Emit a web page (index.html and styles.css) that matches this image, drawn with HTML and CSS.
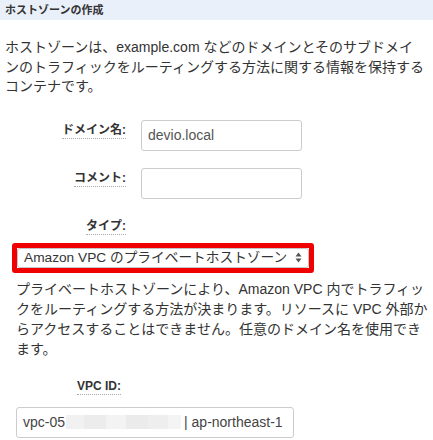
FILE: index.html
```html
<!DOCTYPE html>
<html lang="ja">
<head>
<meta charset="utf-8">
<link rel="stylesheet" href="styles.css">
</head>
<body>
<div class="header">ホストゾーンの作成</div>
<div class="content">
  <p class="desc">ホストゾーンは、example.com などのドメインとそのサブドメインのトラフィックをルーティングする方法に関する情報を保持するコンテナです。</p>
  <div class="form">
    <div class="row">
      <div class="label"><span>ドメイン名:</span></div>
      <div class="field">devio.local</div>
    </div>
    <div class="row">
      <div class="label"><span>コメント:</span></div>
      <div class="field"></div>
    </div>
    <div class="row">
      <div class="label"><span>タイプ:</span></div>
    </div>
  </div>
  <div class="type-block">
    <div class="highlight">
      <div class="select">
        <span class="select-text">Amazon VPC のプライベートホストゾーン</span>
        <svg class="arrows" width="7" height="11" viewBox="0 0 7 11"><path d="M3.5 0.5 L6.5 4.5 L0.5 4.5 Z M3.5 10.5 L6.5 6.5 L0.5 6.5 Z" fill="#555"/></svg>
      </div>
    </div>
    <p class="help">プライベートホストゾーンにより、Amazon VPC 内でトラフィックをルーティングする方法が決まります。リソースに VPC 外部からアクセスすることはできません。任意のドメイン名を使用できます。</p>
    <div class="row vpc-row">
      <div class="label"><span>VPC ID:</span></div>
    </div>
    <div class="field vpc-field">
      <span>vpc-05</span><span class="blur"><i class="b1"></i><i class="b2"></i><i class="b3"></i><i class="b4"></i><i class="b5"></i><i class="b6"></i></span><span>| ap-northeast-1</span>
    </div>
  </div>
</div>
</body>
</html>
```
FILE: styles.css
```css
html, body {
  margin: 0;
  padding: 0;
  background: #fff;
}
body {
  width: 433px;
  height: 440px;
  overflow: hidden;
  font-family: "Liberation Sans", "Noto Sans CJK JP", sans-serif;
  color: #333;
}
.header {
  height: 20px;
  background: #e9f0fa;
  font-size: 11px;
  font-weight: bold;
  line-height: 20px;
  padding-left: 5px;
  color: #333;
}
.content {
  padding: 0 8px 0 5px;
}
.desc {
  margin: 18px 0 0 0;
  font-size: 14px;
  line-height: 19.5px;
}
.form {
  margin-top: 23px;
  display: flex;
  flex-direction: column;
  gap: 17px;
}
.row {
  display: grid;
  grid-template-columns: 121px 161px;
  column-gap: 15px;
  align-items: start;
}
.label {
  text-align: right;
  font-size: 12px;
  font-weight: bold;
  line-height: 16px;
  padding-top: 2px;
  color: #333;
}
.label span {
  border-bottom: 1px dotted #aaa;
  padding-bottom: 1px;
}
.field {
  box-sizing: border-box;
  height: 31px;
  border: 1px solid #ccc;
  border-radius: 3px;
  font-size: 14px;
  line-height: 29px;
  padding: 0 6px;
  color: #555;
  background: #fff;
}
.type-block {
  padding-left: 7px;
}
.highlight {
  margin-top: 9px;
  width: 292px;
  border: 5px solid #f00000;
  border-radius: 3px;
}
.select {
  box-sizing: border-box;
  height: 20px;
  border: 1px solid #c4c4c4;
  border-radius: 3px;
  display: flex;
  align-items: center;
  justify-content: space-between;
  padding: 0 6px 0 6px;
  font-size: 13.7px;
  color: #333;
  background: #fff;
}
.select-text {
  line-height: 18px;
}
.arrows {
  display: block;
}
.help {
  margin: 6px 0 0 4px;
  width: 413px;
  font-size: 14px;
  line-height: 20px;
}
.vpc-row {
  margin-top: 17px;
  margin-left: -12px;
}
.vpc-field {
  margin-top: 13px;
  margin-left: 4px;
  width: 278px;
  display: flex;
  align-items: center;
  color: #444;
}
.blur {
  display: flex;
  height: 14px;
  margin: 0 3px 0 1px;
}
.blur i {
  display: block;
  height: 14px;
}
.b1 { width: 18px; background: #f1f1f1; }
.b2 { width: 22px; background: #ececec; }
.b3 { width: 20px; background: #f3f3f3; }
.b4 { width: 22px; background: #ebebeb; }
.b5 { width: 20px; background: #eeeeee; }
.b6 { width: 13px; background: #f4f4f4; }
```
